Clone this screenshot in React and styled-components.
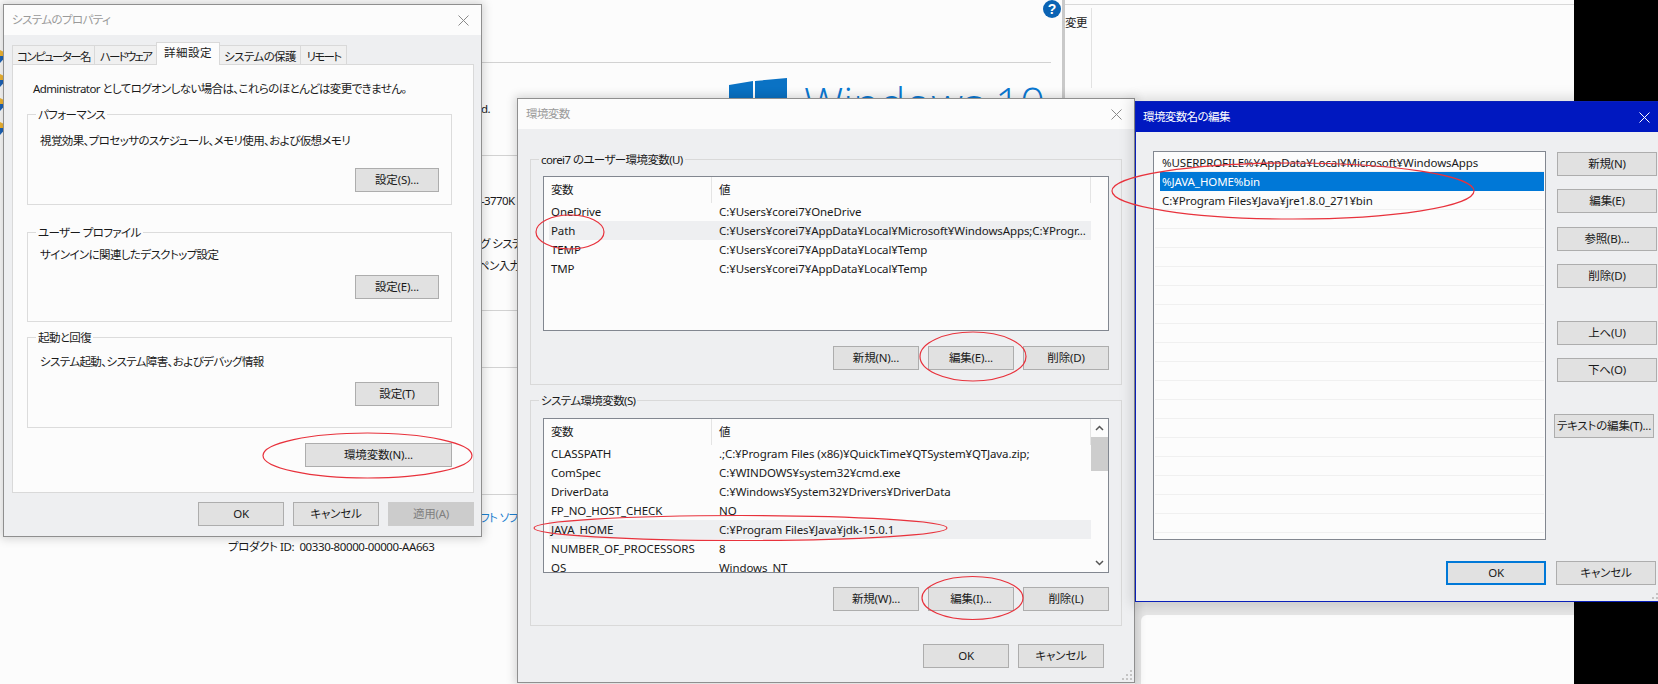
import React from "react";
import styled, { createGlobalStyle } from "styled-components";

const Global = createGlobalStyle`
  html, body { margin: 0; padding: 0; background: #fcfcfc; }
  * { box-sizing: border-box; }
  body {
    font-family: "Noto Sans", "Noto Sans CJK JP", sans-serif;
    font-size: 11.5px;
    letter-spacing: -0.6px;
    line-height: 16px;
    color: #1a1a1a;
    font-feature-settings: "palt";
  }
`;

const latin = `
  font-size: 11.5px;
  letter-spacing: -0.1px;
`;

const Desktop = styled.div`
  position: relative;
  width: 1658px;
  height: 684px;
  overflow: hidden;
  background: #fcfcfc;
`;

/* ---- windows lying behind the dialogs ---- */
const BlackBar = styled.div`
  position: absolute;
  left: 1574px;
  top: 0;
  width: 84px;
  height: 684px;
  background: #000;
`;
const LowerWindow = styled.div`
  position: absolute;
  left: 1135px;
  top: 602px;
  width: 439px;
  height: 82px;
  background: #e6e6e6;
  padding: 13px 0 0 6px;
`;
const LowerSheet = styled.div`
  height: 100%;
  background: #fcfcfc;
  border-top-left-radius: 6px;
`;
const BackColumn = styled.div`
  position: absolute;
  left: 481px;
  top: 0;
  width: 570px;
  padding-top: 62px;
  display: flex;
  flex-direction: column;
  overflow: hidden;
  height: 540px;
`;
const Rule = styled.div`
  height: 1px;
  background: #d2d2d2;
  margin-top: ${(p) => p.$mt || 0}px;
  flex: none;
`;
const Peek = styled.div`
  height: 16px;
  flex: none;
  white-space: nowrap;
  margin-top: ${(p) => p.$mt || 0}px;
  margin-left: ${(p) => p.$ml || 0}px;
  color: ${(p) => p.$color || "#1a1a1a"};
`;
const ProductId = styled.div`
  position: absolute;
  left: 228px;
  top: 539px;
  white-space: nowrap;
  letter-spacing: -0.4px;
`;
const Brand = styled.div`
  position: absolute;
  left: 729px;
  top: 78px;
  display: flex;
  align-items: flex-start;
  gap: 17px;
`;
const BrandText = styled.div`
  font-family: "Open Sans", sans-serif;
  font-weight: 300;
  font-size: 44px;
  line-height: 44px;
  letter-spacing: 0;
  margin-top: 3px;
  color: #0a78d2;
  white-space: nowrap;
  font-feature-settings: normal;
`;
const HelpBadge = styled.div`
  position: absolute;
  left: 1043px;
  top: 0;
  width: 18px;
  height: 18px;
  border-radius: 50%;
  background: #0a63b4;
  color: #fff;
  font: bold 14px/18px "Liberation Sans", sans-serif;
  letter-spacing: 0;
  text-align: center;
`;
const SideWindow = styled.div`
  position: absolute;
  left: 1062px;
  top: 0;
  width: 512px;
  height: 120px;
  border-left: 3px solid #c9c9c9;
  padding: 4px 0 0 0;
`;
const SideTop = styled.div`
  border-top: 1px solid #d9d9d9;
  display: flex;
  height: 84px;
  padding-top: 3px;
`;
const SideLabel = styled.div`
  width: 27px;
  height: 100%;
  border-right: 1px solid #e2e2e2;
  padding-top: 7px;
  white-space: nowrap;
`;
const ShieldStack = styled.div`
  position: absolute;
  left: 0;
  top: 50px;
  display: flex;
  flex-direction: column;
  gap: 11px;
`;

/* ---- dialogs ---- */
const Win = styled.div`
  position: absolute;
  left: ${(p) => p.$x}px;
  top: ${(p) => p.$y}px;
  width: ${(p) => p.$w}px;
  height: ${(p) => p.$h}px;
  background: #eeeff1;
  border: 1px solid ${(p) => p.$edge || "#8f8f8f"};
  box-shadow: ${(p) => p.$shadow || "0 0 9px 2px rgba(0,0,0,.16)"};
  display: flex;
  flex-direction: column;
`;
const TitleBar = styled.div`
  height: 30px;
  flex: none;
  display: flex;
  align-items: center;
  justify-content: space-between;
  background: ${(p) => (p.$active ? "#0018c0" : "#fcfcfc")};
  color: ${(p) => (p.$active ? "#fff" : "#9a9a9a")};
  padding: 0 ${(p) => p.$padR || 12}px 0 ${(p) => p.$padL || 8}px;
`;
const Btn = styled.button`
  width: ${(p) => p.$w || 86}px;
  height: 24px;
  flex: none;
  padding: 0;
  margin-top: ${(p) => p.$mt || 0}px;
  margin-left: ${(p) => p.$ml || 0}px;
  background: ${(p) => (p.$disabled ? "#cccccc" : "#e1e1e1")};
  border: ${(p) => (p.$def ? "2px solid #0078d7" : `1px solid ${p.$disabled ? "#cccccc" : "#adadad"}`)};
  color: ${(p) => (p.$disabled ? "#808080" : "#1a1a1a")};
  font: inherit;
  letter-spacing: -0.2px;
  font-feature-settings: "palt";
  white-space: nowrap;
`;
const ButtonRow = styled.div`
  display: flex;
  justify-content: flex-end;
  gap: ${(p) => p.$gap || 9}px;
  margin-top: ${(p) => p.$mt || 0}px;
  padding-right: ${(p) => p.$pr || 0}px;
`;
const GripWrap = styled.div`
  position: absolute;
  right: 1px;
  bottom: 1px;
  width: 11px;
  height: 11px;
  line-height: 0;
`;

/* system properties */
const SysBody = styled.div`
  flex: 1;
  padding: 8px 7px 0 8px;
  display: flex;
  flex-direction: column;
`;
const TabRow = styled.div`
  display: flex;
  align-items: flex-end;
  height: 22px;
  padding-left: 1px;
  position: relative;
  z-index: 1;
  margin-bottom: -1px;
`;
const Tab = styled.div`
  width: ${(p) => p.$w}px;
  height: ${(p) => (p.$on ? 23 : 20)}px;
  flex: none;
  text-align: center;
  letter-spacing: ${(p) => p.$ls ?? -0.6}px;
  line-height: ${(p) => (p.$on ? 19 : 21)}px;
  background: ${(p) => (p.$on ? "#fcfcfc" : "#f0f0f0")};
  border: 1px solid #d9d9d9;
  border-bottom: ${(p) => (p.$on ? "none" : "1px solid #d9d9d9")};
  margin-left: -1px;
  white-space: nowrap;
`;
const TabPanel = styled.div`
  height: 429px;
  background: #fcfcfc;
  border: 1px solid #d9d9d9;
  padding: 16px 21px 0 14px;
  display: flex;
  flex-direction: column;
`;
const Intro = styled.div`
  margin-left: 6px;
  height: 16px;
  white-space: nowrap;
`;
const Group = styled.div`
  position: relative;
  flex: none;
  border: 1px solid ${(p) => p.$edge || "#dcdcdc"};
  height: ${(p) => p.$h}px;
  margin-top: ${(p) => p.$mt || 0}px;
  padding: ${(p) => p.$pt || 0}px 12px 0 12px;
`;
const Legend = styled.span`
  position: absolute;
  left: 8px;
  top: -8px;
  padding: 0 2px;
  background: ${(p) => p.$bg || "#fcfcfc"};
  white-space: nowrap;
`;
const Desc = styled.div`
  height: 16px;
  white-space: nowrap;
  margin-top: 2px;
  margin-bottom: -2px;
`;
const SysFoot = styled.div`
  display: flex;
  justify-content: flex-end;
  gap: 9px;
  margin-top: 9px;
`;

/* environment variables */
const EnvBody = styled.div`
  flex: 1;
  padding: 30px 12px 0 12px;
  display: flex;
  flex-direction: column;
  position: relative;
`;
const ListBox = styled.div`
  display: flex;
  height: 155px;
  border: 1px solid #828790;
  background: #fcfcfc;
  overflow: hidden;
  margin-top: 8px;
`;
const ListMain = styled.div`
  width: 547px;
  flex: none;
  padding-left: 5px;
`;
const ListHead = styled.div`
  display: grid;
  grid-template-columns: 163px 379px;
  height: 25px;
`;
const HeadCell = styled.div`
  padding-left: ${(p) => p.$pl || 2}px;
  line-height: 26px;
  border-right: 1px solid #e4e4e4;
`;
const Row = styled.div`
  display: grid;
  grid-template-columns: 163px 379px;
  height: 19px;
  line-height: 19px;
  background: ${(p) => (p.$hl ? "#eeeff1" : "transparent")};
  white-space: nowrap;
  ${latin}
`;
const Cell = styled.div`
  padding-left: ${(p) => p.$pl || 2}px;
  overflow: hidden;
`;
const Scroll = styled.div`
  width: 17px;
  flex: none;
  background: #fcfcfc;
  display: flex;
  flex-direction: column;
  align-items: center;
  justify-content: flex-start;
`;
const ScrollArrow = styled.div`
  height: 18px;
  flex: none;
  display: flex;
  align-items: center;
  justify-content: center;
`;
const ScrollThumb = styled.div`
  width: 100%;
  height: 34px;
  background: #cdcdcd;
`;
const ScrollTrack = styled.div`
  flex: 1;
  width: 100%;
`;

/* path editor */
const EditBody = styled.div`
  flex: 1;
  padding: 19px 0 0 17px;
  display: grid;
  grid-template-columns: 393px 1fr;
  grid-template-rows: 389px 1fr;
  column-gap: 11px;
`;
const PathList = styled.div`
  border: 1px solid #828790;
  background: #fcfcfc;
  padding: 1px 1px 0 1px;
  overflow: hidden;
`;
const PathRow = styled.div`
  height: 19px;
  line-height: 19px;
  white-space: nowrap;
  border-bottom: 1px solid ${(p) => (p.$sel ? "transparent" : "#f0f0f0")};
  background: ${(p) => (p.$sel ? "#0078d7" : "transparent")};
  color: ${(p) => (p.$sel ? "#fff" : "#1a1a1a")};
  margin-left: ${(p) => (p.$sel ? 5 : 0)}px;
  padding-left: ${(p) => (p.$sel ? 2 : 7)}px;
  ${latin}
`;
const SideButtons = styled.div`
  display: flex;
  flex-direction: column;
  padding-top: 1px;
`;
const EditFoot = styled.div`
  grid-column: 1 / 3;
  display: flex;
  gap: 10px;
  padding: 21px 0 0 293px;
`;

const Marks = styled.svg`
  position: absolute;
  left: 0;
  top: 0;
  pointer-events: none;
`;

const CloseX = ({ color = "#8a8a8a", size = 11 }) => (
  <svg width={size} height={size} viewBox="0 0 11 11">
    <path d="M.5.5l10 10M10.5.5l-10 10" stroke={color} strokeWidth="1" fill="none" />
  </svg>
);

const Grip = () => (
  <GripWrap>
    <svg width="11" height="11" viewBox="0 0 11 11" fill="#c4c4c4">
      <rect x="8" y="0" width="2" height="2" />
      <rect x="4" y="4" width="2" height="2" />
      <rect x="8" y="4" width="2" height="2" />
      <rect x="0" y="8" width="2" height="2" />
      <rect x="4" y="8" width="2" height="2" />
      <rect x="8" y="8" width="2" height="2" />
    </svg>
  </GripWrap>
);

const Shield = () => (
  <svg width="4" height="13" viewBox="0 0 4 13">
    <path d="M0 0l4 2v4H0z" fill="#f2b632" />
    <path d="M0 6h4v2.5L0 13z" fill="#1c63b8" />
  </svg>
);

const userVars = [
  ["OneDrive", "C:¥Users¥corei7¥OneDrive"],
  ["Path", "C:¥Users¥corei7¥AppData¥Local¥Microsoft¥WindowsApps;C:¥Progr...", true],
  ["TEMP", "C:¥Users¥corei7¥AppData¥Local¥Temp"],
  ["TMP", "C:¥Users¥corei7¥AppData¥Local¥Temp"],
];
const sysVars = [
  ["CLASSPATH", ".;C:¥Program Files (x86)¥QuickTime¥QTSystem¥QTJava.zip;"],
  ["ComSpec", "C:¥WINDOWS¥system32¥cmd.exe"],
  ["DriverData", "C:¥Windows¥System32¥Drivers¥DriverData"],
  ["FP_NO_HOST_CHECK", "NO"],
  ["JAVA_HOME", "C:¥Program Files¥Java¥jdk-15.0.1", true],
  ["NUMBER_OF_PROCESSORS", "8"],
  ["OS", "Windows_NT"],
];

const VarList = ({ rows, scroll }) => (
  <ListBox>
    <ListMain>
      <ListHead>
        <HeadCell>変数</HeadCell>
        <HeadCell $pl={7}>値</HeadCell>
      </ListHead>
      {rows.map(([n, v, hl]) => (
        <Row key={n} $hl={hl}>
          <Cell>{n}</Cell>
          <Cell $pl={7}>{v}</Cell>
        </Row>
      ))}
    </ListMain>
    {scroll && (
      <Scroll>
        <ScrollArrow>
          <svg width="9" height="6" viewBox="0 0 9 6">
            <path d="M1 5l3.5-3.5L8 5" stroke="#555" strokeWidth="1.5" fill="none" />
          </svg>
        </ScrollArrow>
        <ScrollThumb />
        <ScrollTrack />
        <ScrollArrow>
          <svg width="9" height="6" viewBox="0 0 9 6">
            <path d="M1 1l3.5 3.5L8 1" stroke="#555" strokeWidth="1.5" fill="none" />
          </svg>
        </ScrollArrow>
      </Scroll>
    )}
  </ListBox>
);

export default function App() {
  return (
    <Desktop>
      <Global />
      <BlackBar />
      <LowerWindow>
        <LowerSheet />
      </LowerWindow>
      <SideWindow>
        <SideTop>
          <SideLabel>変更</SideLabel>
        </SideTop>
      </SideWindow>
      <ShieldStack>
        <Shield />
        <Shield />
        <Shield />
        <Shield />
      </ShieldStack>
      <Brand>
        <svg width="58" height="58" viewBox="0 0 58 58" fill="#0a72c4">
          <path d="M0 7l24-4v25H0zM26 3L58 0v28H26z" />
        </svg>
        <BrandText>Windows 10</BrandText>
      </Brand>
      <HelpBadge>?</HelpBadge>
      <BackColumn>
        <Rule />
        <Peek $mt={38}>d.</Peek>
        <Rule $mt={38} />
        <Peek $mt={37}>-3770K</Peek>
        <Peek $mt={27} $ml={-1}>グ システム</Peek>
        <Peek $mt={6} $ml={-3}>ペン入力</Peek>
        <Rule $mt={36} />
        <Rule $mt={56} />
        <Rule $mt={126} />
        <Peek $mt={15} $color="#1b7fd0" $ml={-1}>フト ソフト</Peek>
      </BackColumn>
      <ProductId>プロダクト ID:&nbsp; 00330-80000-00000-AA663</ProductId>

      {/* システムのプロパティ */}
      <Win $x={3} $y={4} $w={479} $h={533}>
        <TitleBar>
          <span>システムのプロパティ</span>
          <CloseX />
        </TitleBar>
        <SysBody>
          <TabRow>
            <Tab $w={83} $ls={-1.6}>コンピューター名</Tab>
            <Tab $w={63} $ls={-1.8}>ハードウェア</Tab>
            <Tab $w={64} $on $ls={0.5}>詳細設定</Tab>
            <Tab $w={82}>システムの保護</Tab>
            <Tab $w={47} $ls={-1.7}>リモート</Tab>
          </TabRow>
          <TabPanel>
            <Intro>Administrator としてログオンしない場合は、これらのほとんどは変更できません。</Intro>
            <Group $h={91} $mt={17} $pt={16}>
              <Legend>パフォーマンス</Legend>
              <Desc>視覚効果、プロセッサのスケジュール、メモリ使用、および仮想メモリ</Desc>
              <ButtonRow $mt={21}>
                <Btn $w={84}>設定(S)...</Btn>
              </ButtonRow>
            </Group>
            <Group $h={90} $mt={27} $pt={12}>
              <Legend>ユーザー プロファイル</Legend>
              <Desc>サインインに関連したデスクトップ設定</Desc>
              <ButtonRow $mt={14}>
                <Btn $w={84}>設定(E)...</Btn>
              </ButtonRow>
            </Group>
            <Group $h={91} $mt={15} $pt={14}>
              <Legend>起動と回復</Legend>
              <Desc>システム起動、システム障害、およびデバッグ情報</Desc>
              <ButtonRow $mt={14}>
                <Btn $w={84}>設定(T)</Btn>
              </ButtonRow>
            </Group>
            <ButtonRow $mt={15}>
              <Btn $w={147}>環境変数(N)...</Btn>
            </ButtonRow>
          </TabPanel>
          <SysFoot>
            <Btn>OK</Btn>
            <Btn>キャンセル</Btn>
            <Btn $disabled>適用(A)</Btn>
          </SysFoot>
        </SysBody>
      </Win>

      {/* 環境変数 */}
      <Win $x={517} $y={98} $w={618} $h={585}>
        <TitleBar>
          <span>環境変数</span>
          <CloseX />
        </TitleBar>
        <EnvBody>
          <Group $h={226} $edge="#d9d9d9" $pt={8}>
            <Legend $bg="#eeeff1">corei7 のユーザー環境変数(U)</Legend>
            <VarList rows={userVars} />
            <ButtonRow $mt={15} $gap={9}>
              <Btn>新規(N)...</Btn>
              <Btn>編集(E)...</Btn>
              <Btn>削除(D)</Btn>
            </ButtonRow>
          </Group>
          <Group $h={226} $mt={15} $edge="#d9d9d9" $pt={9}>
            <Legend $bg="#eeeff1">システム環境変数(S)</Legend>
            <VarList rows={sysVars} scroll />
            <ButtonRow $mt={14} $gap={9}>
              <Btn>新規(W)...</Btn>
              <Btn>編集(I)...</Btn>
              <Btn>削除(L)</Btn>
            </ButtonRow>
          </Group>
          <ButtonRow $mt={18} $gap={9} $pr={18}>
            <Btn>OK</Btn>
            <Btn>キャンセル</Btn>
          </ButtonRow>
        </EnvBody>
        <Grip />
      </Win>

      {/* 環境変数名の編集 */}
      <Win $x={1135} $y={101} $w={530} $h={501} $edge="#0a20b8" $shadow="0 0 13px 3px rgba(0,0,0,.14)">
        <TitleBar $active $padL={7} $padR={14}>
          <span>環境変数名の編集</span>
          <CloseX color="#fff" />
        </TitleBar>
        <EditBody>
          <PathList>
            <PathRow>%USERPROFILE%¥AppData¥Local¥Microsoft¥WindowsApps</PathRow>
            <PathRow $sel>%JAVA_HOME%bin</PathRow>
            <PathRow>C:¥Program Files¥Java¥jre1.8.0_271¥bin</PathRow>
            {Array.from({ length: 17 }, (_, i) => (
              <PathRow key={i} />
            ))}
          </PathList>
          <SideButtons>
            <Btn $w={100}>新規(N)</Btn>
            <Btn $w={100} $mt={13}>編集(E)</Btn>
            <Btn $w={100} $mt={14}>参照(B)...</Btn>
            <Btn $w={100} $mt={13}>削除(D)</Btn>
            <Btn $w={100} $mt={33}>上へ(U)</Btn>
            <Btn $w={100} $mt={13}>下へ(O)</Btn>
            <Btn $w={100} $mt={32} $ml={-3}>テキストの編集(T)...</Btn>
          </SideButtons>
          <EditFoot>
            <Btn $w={100} $def>OK</Btn>
            <Btn $w={100}>キャンセル</Btn>
          </EditFoot>
        </EditBody>
        <Grip />
      </Win>

      <Marks width="1658" height="684" fill="none" stroke="#e8323c" strokeWidth="1.2">
        <ellipse cx="367.5" cy="455.5" rx="104.5" ry="22.5" />
        <ellipse cx="570" cy="232" rx="34" ry="17" />
        <ellipse cx="973" cy="356.5" rx="53" ry="24.5" />
        <ellipse cx="972.5" cy="598" rx="50.5" ry="21.5" />
        <ellipse cx="740.5" cy="528" rx="206.5" ry="12.5" />
        <ellipse cx="1293" cy="191" rx="181" ry="28" />
      </Marks>
    </Desktop>
  );
}
